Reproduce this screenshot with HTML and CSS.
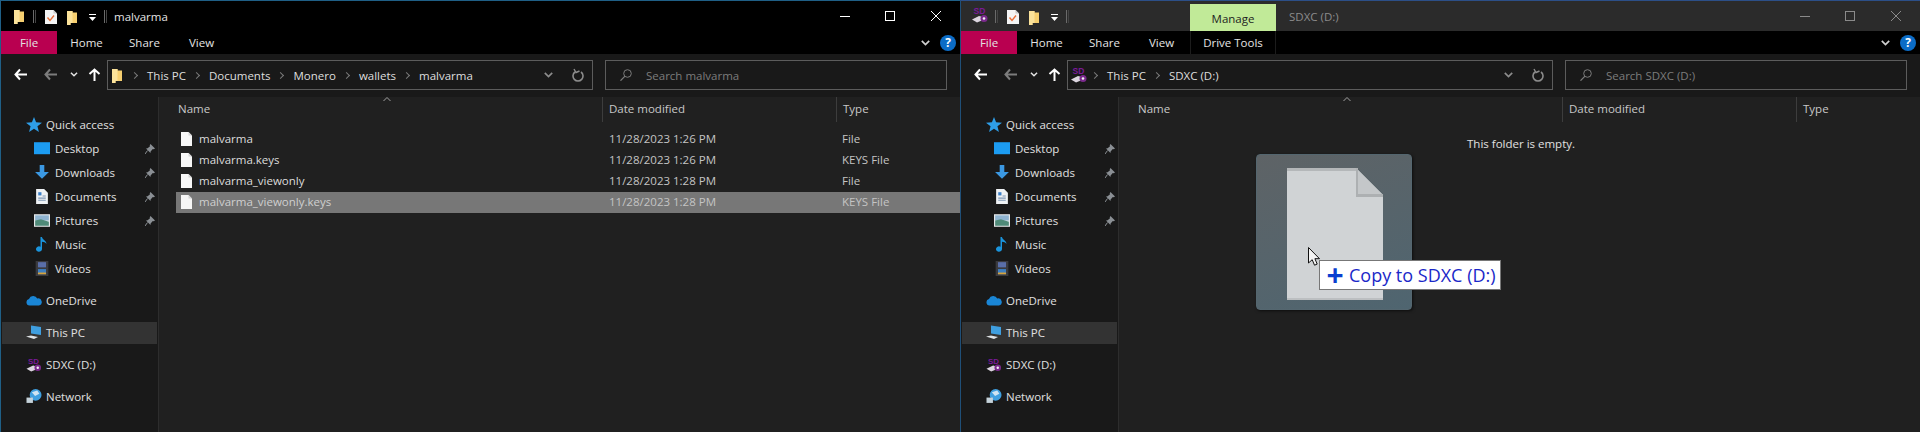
FILE: index.html
```html
<!DOCTYPE html>
<html lang="en">
  <head>
    <meta charset="UTF-8" />
    <title>File Explorer</title>
    <link rel="stylesheet" href="styles.css">
  </head>
  <body>
    <!-- shared icons -->
    <svg class="sprite" xmlns="http://www.w3.org/2000/svg">
      <symbol id="i-folder" viewBox="0 0 10 15">
        <path d="M0 1h5.500v1.500H10V13H3.500v2H0z" fill="#f6cf70"/>
        <path d="M0 1h5.500v12H3.500v2H0z" fill="#fbe29a"/>
      </symbol>
      <symbol id="i-props" viewBox="0 0 12 14">
        <path d="M0 0h8.500L12 3.500V14H0z" fill="#f4f4f4"/>
        <path d="M8.500 0v3.500H12z" fill="#c8c8c8"/>
        <path d="M2.500 7.500l2.500 3 4-5" fill="none" stroke="#e8703a" stroke-width="1.400"/>
      </symbol>
      <symbol id="i-qat" viewBox="0 0 7 7">
        <path d="M0 0h7v1H0zM0 3h7L3.500 7z" fill="#fff"/>
      </symbol>
      <symbol id="i-sd" viewBox="0 0 16 16">
        <text x="1.500" y="7" font-family="Liberation Sans, sans-serif" font-size="8.500" font-weight="700" fill="#7a1a98">SD</text>
        <path d="M0 12.500L7 9l4 1v3l-6 2.500z" fill="#dcd6e0"/>
        <circle cx="12" cy="11.500" r="3.500" fill="#7a2a8c"/>
        <circle cx="12" cy="11.500" r="1.300" fill="#f2f2f2"/>
      </symbol>
      <symbol id="i-arrow" viewBox="0 0 13 13">
        <path d="M6 1.500L1.500 6.500 6 11.500M2 6.500h11" fill="none" stroke="currentColor" stroke-width="2"/>
      </symbol>
      <symbol id="i-up" viewBox="0 0 13 13">
        <path d="M1.500 6L6.500 1.500 11.500 6M6.500 2v11" fill="none" stroke="currentColor" stroke-width="2"/>
      </symbol>
      <symbol id="i-down" viewBox="0 0 9 6">
        <path d="M.8 .8L4.500 4.500 8.200 .8" fill="none" stroke="currentColor" stroke-width="1.700"/>
      </symbol>
      <symbol id="i-refresh" viewBox="0 0 12 14">
        <path d="M3 4a5 5 0 1 0 6 0" fill="none" stroke="currentColor" stroke-width="1.600"/>
        <path d="M2 1l2 3.500 3.500-1.500" fill="none" stroke="currentColor" stroke-width="1.400"/>
      </symbol>
      <symbol id="i-search" viewBox="0 0 12 12">
        <circle cx="7.500" cy="4.500" r="3.800" fill="none" stroke="currentColor"/>
        <path d="M5 7.200L.5 11.700" stroke="currentColor" stroke-width="1.200"/>
      </symbol>
      <symbol id="i-file" viewBox="0 0 11 14">
        <path d="M0 0h7.500L11 3.500V14H0z" fill="#f6f6f6"/>
        <path d="M7.500 0v3.500H11z" fill="#d4d4d4"/>
      </symbol>
      <symbol id="i-star" viewBox="0 0 13 12">
        <path d="M6.500 0l1.700 4.200 4.800.3-3.700 3 1.200 4.500-4-2.500-4 2.500 1.200-4.500L0 4.500l4.800-.3z" fill="#2e9ee8"/>
      </symbol>
      <symbol id="i-desktop" viewBox="0 0 14 11">
        <path d="M0 0h14v10.500H0z" fill="#1c9cf2"/>
      </symbol>
      <symbol id="i-dl" viewBox="0 0 12 13">
        <path d="M4 0h4v6h4l-6 6-6-6h4z" fill="#3b98e2"/>
      </symbol>
      <symbol id="i-doc" viewBox="0 0 11 14">
        <path d="M0 0h7.500L11 3.500V14H0z" fill="#eef1f4"/>
        <path d="M2 3h3v3H2z" fill="#3b80c8"/>
        <path d="M6 6h3v1H6zM2 8h7v1H2zM2 10h7v1H2z" fill="#7f98b5"/>
      </symbol>
      <symbol id="i-pic" viewBox="0 0 14 11">
        <path d="M0 0h14v11H0z" fill="#e6e9ea"/>
        <path d="M1 1h12v4.500H1z" fill="#8fb4d0"/>
        <path d="M1 5.500l5-1 7 2V10H1z" fill="#4f8a78"/>
      </symbol>
      <symbol id="i-music" viewBox="0 0 11 15">
        <path d="M4 0h1.500c.3 3 4.500 3.500 4.500 7-1-1.500-2.500-2-4.500-2.200V12a3 2.700 0 1 1-1.500-2.300z" fill="#1a94dc"/>
      </symbol>
      <symbol id="i-video" viewBox="0 0 11 13">
        <path d="M0 0h11v13H0z" fill="#3a3a3e"/>
        <path d="M2 1h7v4.500H2z" fill="#5a6ea8"/>
        <path d="M2 7h7v4.500H2z" fill="#3d7fc0"/>
        <path d="M2 10h7v1.500H2z" fill="#d8a23a"/>
      </symbol>
      <symbol id="i-cloud" viewBox="0 0 16 10">
        <path d="M3.500 10A3.300 3.300 0 0 1 3 3.500 4.500 4.500 0 0 1 11.300 3 3.500 3.500 0 0 1 13 10z" fill="#1a86d6"/>
      </symbol>
      <symbol id="i-pc" viewBox="0 0 16 14">
        <path d="M5 0l10 1.500v8L5 8z" fill="#3f9fe0"/>
        <path d="M0 11l5-1 7 1.500-4 2z" fill="#dfe3e6"/>
      </symbol>
      <symbol id="i-net" viewBox="0 0 14 14">
        <circle cx="8.500" cy="5.500" r="5.500" fill="#3f9fe0"/>
        <path d="M5 3l5-1.500 2 3-4 2z" fill="#cfe4f2"/>
        <path d="M0 8h6v5H0z" fill="#c5d2da"/>
      </symbol>
      <symbol id="i-pin" viewBox="0 0 10 10">
        <path d="M5.500 0L10 4.500 8.800 5.300 7.800 5 5.600 7.400 5.500 9 1 4.500l1.600-.2L5 2.200l-.3-1z" fill="#8a8f94"/>
        <path d="M2.500 6.500L0 10" stroke="#8a8f94" stroke-width="1"/>
      </symbol>
    </svg>

    <div class="window window-active">
      <div class="titlebar">
        <svg class="ic-folder qat-first"><use href="#i-folder"/></svg>
        <span class="qat-sep"></span>
        <svg class="ic-props"><use href="#i-props"/></svg>
        <svg class="ic-folder qat-folder"><use href="#i-folder"/></svg>
        <svg class="ic-qat"><use href="#i-qat"/></svg>
        <span class="qat-sep qat-sep-end"></span>
        <span class="title">malvarma</span>
        <div class="controls">
          <span class="ctl ctl-min"></span>
          <span class="ctl ctl-max"></span>
          <svg class="ctl ctl-close" viewBox="0 0 10 10"><path d="M0 0l10 10M10 0L0 10" stroke="currentColor" stroke-width="1"/></svg>
        </div>
      </div>
      <div class="ribbon">
        <span class="tab tab-file">File</span>
        <span class="tab tab-home">Home</span>
        <span class="tab tab-share">Share</span>
        <span class="tab tab-view">View</span>
        <svg class="ribbon-chev"><use href="#i-down"/></svg>
        <span class="help">?</span>
      </div>
      <div class="nav">
        <svg class="nav-back"><use href="#i-arrow"/></svg>
        <svg class="nav-fwd"><use href="#i-arrow"/></svg>
        <svg class="nav-recent"><use href="#i-down"/></svg>
        <svg class="nav-up"><use href="#i-up"/></svg>
        <div class="address">
          <svg class="ic-folder addr-icon"><use href="#i-folder"/></svg>
          <span class="crumb-sep"></span>
          <span>This PC</span>
          <span class="crumb-sep"></span>
          <span>Documents</span>
          <span class="crumb-sep"></span>
          <span>Monero</span>
          <span class="crumb-sep"></span>
          <span>wallets</span>
          <span class="crumb-sep"></span>
          <span>malvarma</span>
          <svg class="addr-chev"><use href="#i-down"/></svg>
          <svg class="addr-refresh"><use href="#i-refresh"/></svg>
        </div>
        <div class="search">
          <svg class="search-icon"><use href="#i-search"/></svg>
          <span>Search malvarma</span>
        </div>
      </div>
      <div class="main">
        <div class="sidebar">
          <div class="group">
            <div class="side-row"><svg class="side-ic"><use href="#i-star"/></svg>Quick access</div>
            <div class="side-row side-sub"><svg class="side-ic"><use href="#i-desktop"/></svg>Desktop<svg class="pin"><use href="#i-pin"/></svg></div>
            <div class="side-row side-sub"><svg class="side-ic"><use href="#i-dl"/></svg>Downloads<svg class="pin"><use href="#i-pin"/></svg></div>
            <div class="side-row side-sub"><svg class="side-ic"><use href="#i-doc"/></svg>Documents<svg class="pin"><use href="#i-pin"/></svg></div>
            <div class="side-row side-sub"><svg class="side-ic"><use href="#i-pic"/></svg>Pictures<svg class="pin"><use href="#i-pin"/></svg></div>
            <div class="side-row side-sub"><svg class="side-ic"><use href="#i-music"/></svg>Music</div>
            <div class="side-row side-sub"><svg class="side-ic"><use href="#i-video"/></svg>Videos</div>
          </div>
          <div class="group"><div class="side-row"><svg class="side-ic"><use href="#i-cloud"/></svg>OneDrive</div></div>
          <div class="group"><div class="side-row side-current"><svg class="side-ic"><use href="#i-pc"/></svg>This PC</div></div>
          <div class="group"><div class="side-row"><svg class="side-ic"><use href="#i-sd"/></svg>SDXC (D:)</div></div>
          <div class="group"><div class="side-row"><svg class="side-ic"><use href="#i-net"/></svg>Network</div></div>
        </div>
        <div class="content">
          <div class="head">
            <span class="col col-name">Name<svg class="sort" viewBox="0 0 8 4"><path d="M.5 4L4 .5 7.500 4" fill="none" stroke="currentColor"/></svg></span>
            <span class="col col-date">Date modified</span>
            <span class="col col-type">Type</span>
          </div>
          <div class="files">
            <div class="file"><span class="file-name"><svg class="file-ic"><use href="#i-file"/></svg>malvarma</span><span class="file-date">11/28/2023 1:26 PM</span><span class="file-type">File</span></div>
            <div class="file"><span class="file-name"><svg class="file-ic"><use href="#i-file"/></svg>malvarma.keys</span><span class="file-date">11/28/2023 1:26 PM</span><span class="file-type">KEYS File</span></div>
            <div class="file"><span class="file-name"><svg class="file-ic"><use href="#i-file"/></svg>malvarma_viewonly</span><span class="file-date">11/28/2023 1:28 PM</span><span class="file-type">File</span></div>
            <div class="file file-selected"><span class="file-name"><svg class="file-ic"><use href="#i-file"/></svg>malvarma_viewonly.keys</span><span class="file-date">11/28/2023 1:28 PM</span><span class="file-type">KEYS File</span></div>
          </div>
        </div>
      </div>
    </div>

    <div class="window window-inactive">
      <div class="titlebar">
        <svg class="ic-sd qat-first"><use href="#i-sd"/></svg>
        <span class="qat-sep"></span>
        <svg class="ic-props"><use href="#i-props"/></svg>
        <svg class="ic-folder qat-folder"><use href="#i-folder"/></svg>
        <svg class="ic-qat"><use href="#i-qat"/></svg>
        <span class="qat-sep qat-sep-end"></span>
        <span class="context-tab">Manage</span>
        <span class="title">SDXC (D:)</span>
        <div class="controls">
          <span class="ctl ctl-min"></span>
          <span class="ctl ctl-max"></span>
          <svg class="ctl ctl-close" viewBox="0 0 10 10"><path d="M0 0l10 10M10 0L0 10" stroke="currentColor" stroke-width="1"/></svg>
        </div>
      </div>
      <div class="ribbon">
        <span class="tab tab-file">File</span>
        <span class="tab tab-home">Home</span>
        <span class="tab tab-share">Share</span>
        <span class="tab tab-view">View</span>
        <span class="tab tab-drive">Drive Tools</span>
        <svg class="ribbon-chev"><use href="#i-down"/></svg>
        <span class="help">?</span>
      </div>
      <div class="nav">
        <svg class="nav-back"><use href="#i-arrow"/></svg>
        <svg class="nav-fwd"><use href="#i-arrow"/></svg>
        <svg class="nav-recent"><use href="#i-down"/></svg>
        <svg class="nav-up"><use href="#i-up"/></svg>
        <div class="address">
          <svg class="ic-sd addr-icon"><use href="#i-sd"/></svg>
          <span class="crumb-sep"></span>
          <span>This PC</span>
          <span class="crumb-sep"></span>
          <span>SDXC (D:)</span>
          <svg class="addr-chev"><use href="#i-down"/></svg>
          <svg class="addr-refresh"><use href="#i-refresh"/></svg>
        </div>
        <div class="search">
          <svg class="search-icon"><use href="#i-search"/></svg>
          <span>Search SDXC (D:)</span>
        </div>
      </div>
      <div class="main">
        <div class="sidebar">
          <div class="group">
            <div class="side-row"><svg class="side-ic"><use href="#i-star"/></svg>Quick access</div>
            <div class="side-row side-sub"><svg class="side-ic"><use href="#i-desktop"/></svg>Desktop<svg class="pin"><use href="#i-pin"/></svg></div>
            <div class="side-row side-sub"><svg class="side-ic"><use href="#i-dl"/></svg>Downloads<svg class="pin"><use href="#i-pin"/></svg></div>
            <div class="side-row side-sub"><svg class="side-ic"><use href="#i-doc"/></svg>Documents<svg class="pin"><use href="#i-pin"/></svg></div>
            <div class="side-row side-sub"><svg class="side-ic"><use href="#i-pic"/></svg>Pictures<svg class="pin"><use href="#i-pin"/></svg></div>
            <div class="side-row side-sub"><svg class="side-ic"><use href="#i-music"/></svg>Music</div>
            <div class="side-row side-sub"><svg class="side-ic"><use href="#i-video"/></svg>Videos</div>
          </div>
          <div class="group"><div class="side-row"><svg class="side-ic"><use href="#i-cloud"/></svg>OneDrive</div></div>
          <div class="group"><div class="side-row side-current"><svg class="side-ic"><use href="#i-pc"/></svg>This PC</div></div>
          <div class="group"><div class="side-row"><svg class="side-ic"><use href="#i-sd"/></svg>SDXC (D:)</div></div>
          <div class="group"><div class="side-row"><svg class="side-ic"><use href="#i-net"/></svg>Network</div></div>
        </div>
        <div class="content">
          <div class="head">
            <span class="col col-name">Name<svg class="sort" viewBox="0 0 8 4"><path d="M.5 4L4 .5 7.500 4" fill="none" stroke="currentColor"/></svg></span>
            <span class="col col-date">Date modified</span>
            <span class="col col-type">Type</span>
          </div>
          <div class="empty">This folder is empty.</div>
        </div>
      </div>

      <!-- drag image over the empty folder -->
      <div class="drag">
        <svg class="drag-page" viewBox="0 0 96 132">
          <path d="M0 0h69l27 27v105H0z" fill="#d0d3d5"/>
          <path d="M0 0h69v3H0z" fill="#b4b7b9"/>
          <path d="M0 130h96v2H0z" fill="#bcbfc1"/>
          <path d="M69 0l27 27v2H69z" fill="#c4c7c9"/>
          <path d="M69 0v29h27v-3H71V0z" fill="#adb0b2"/>
        </svg>
      </div>
      <svg class="drag-cursor" viewBox="0 0 12 19">
        <path d="M.5 .5v15.500l3.700-3.300 2.300 5.500 2.700-1.100-2.300-5.400H11.500z" fill="#f4f4f4" stroke="#111"/>
      </svg>
      <div class="drag-tip"><span class="drag-plus">+</span>Copy to SDXC (D:)</div>
    </div>
  </body>
</html>
```

FILE: styles.css
```css
* {
  box-sizing: border-box;
}

html, body {
  height: 100%;
}

body {
  margin: 0;
  display: flex;
  overflow: hidden;
  background: #000;
  color: #e4e4e4;
  font-family: "Open Sans", "Noto Sans", sans-serif;
  font-size: 11.5px;
}

svg {
  display: block;
  flex: none;
}

.sprite {
  display: none;
}

.window {
  position: relative;
  width: 960px;
  height: 432px;
  display: flex;
  flex-direction: column;
  border-top: 1px solid #1f5f86;
  border-left: 1px solid #1f5f86;
}

.window-inactive {
  border-top-color: #2c4f88;
  border-left-color: #1f4f78;
}

/* title bar */
.titlebar {
  height: 30px;
  flex: none;
  display: flex;
  align-items: center;
  background: #000;
}

.window-inactive .titlebar {
  background: #2b2b2b;
}

.qat-first {
  margin-left: 13px;
}

.ic-folder {
  width: 10px;
  height: 15px;
}

.ic-sd {
  width: 16px;
  height: 16px;
}

.window-inactive .qat-first {
  margin-left: 11px;
  margin-top: -2px;
}

.window-inactive .qat-sep {
  margin-left: 7px;
}

.window-inactive .qat-sep-end {
  margin-left: 8px;
}

.qat-sep {
  width: 3px;
  height: 13px;
  margin-left: 9px;
  border-left: 1px solid #6a6a6a;
  border-right: 1px solid #444;
}

.qat-sep-end {
  margin-left: 8px;
}

.ic-props {
  width: 12px;
  height: 14px;
  margin-left: 9px;
  margin-top: 1px;
}

.qat-folder {
  margin-left: 10px;
  margin-top: 2px;
}

.ic-qat {
  width: 7px;
  height: 7px;
  margin-left: 12px;
  margin-top: 2px;
}

.title {
  margin-left: 7px;
}

.window-inactive .title {
  margin-left: 13px;
  color: #8c8c8c;
}

.context-tab {
  align-self: flex-end;
  width: 86px;
  height: 27px;
  margin-left: 121px;
  display: flex;
  align-items: center;
  justify-content: center;
  padding-top: 2px;
  background: #c1ea98;
  color: #1e1e1e;
}

.controls {
  margin-left: auto;
  display: flex;
  align-items: center;
  padding-right: 19px;
  color: #fff;
}

.window-inactive .controls {
  color: #8a8a8a;
}

.ctl {
  width: 10px;
  height: 10px;
  margin-left: 35px;
}

.ctl-min {
  border-bottom: 1px solid currentColor;
  height: 6px;
  margin-bottom: 4px;
}

.ctl-max {
  border: 1px solid currentColor;
}

.ctl-close {
  margin-left: 36px;
}

/* ribbon */
.ribbon {
  height: 23px;
  flex: none;
  display: flex;
  align-items: center;
  background: #000;
}

.tab {
  height: 100%;
  display: flex;
  align-items: center;
  justify-content: center;
}

.tab-file {
  width: 56px;
  background: #b90050;
}

.tab-home {
  width: 59px;
}

.tab-share {
  width: 57px;
}

.tab-view {
  width: 57px;
}

.tab-drive {
  width: 86px;
  border-left: 1px solid #1c1c1c;
  border-right: 1px solid #1c1c1c;
}

.ribbon-chev {
  width: 9px;
  height: 6px;
  margin-left: auto;
  color: #d0d0d0;
}

.help {
  width: 16px;
  height: 16px;
  margin: 0 4px 0 10px;
  display: flex;
  align-items: center;
  justify-content: center;
  border-radius: 50%;
  background: #0b6cc6;
  color: #fff;
  font-weight: 700;
  font-size: 12px;
}

/* nav row */
.nav {
  height: 43px;
  flex: none;
  display: flex;
  align-items: flex-start;
  padding: 6px 0 0 13px;
  background: #191919;
}

.nav-back, .nav-fwd, .nav-up {
  width: 13px;
  height: 13px;
  margin-top: 8px;
  color: #fff;
}

.nav-fwd {
  margin-left: 17px;
  color: #7d7d7d;
}

.nav-recent {
  width: 8px;
  height: 5px;
  margin: 12px 0 0 13px;
  color: #e6e6e6;
}

.nav-up {
  margin-left: 10px;
}

.address, .search {
  height: 30px;
  display: flex;
  align-items: center;
  border: 1px solid #5c5c5c;
}

.address {
  width: 486px;
  margin-left: 6px;
  padding-left: 4px;
  gap: 9px;
  color: #dedede;
}

.addr-icon {
  margin-right: 2px;
}

.address .ic-sd {
  margin-left: -1px;
  margin-right: -3px;
}

.crumb-sep {
  width: 5px;
  height: 5px;
  margin: 0 1px 0 -1px;
  border-top: 1.5px solid #7a7a7a;
  border-right: 1.5px solid #7a7a7a;
  transform: rotate(45deg);
}

.addr-chev {
  width: 9px;
  height: 6px;
  margin-left: auto;
  color: #8c8c8c;
}

.addr-refresh {
  width: 12px;
  height: 14px;
  margin-right: 8px;
  margin-left: 10px;
  color: #8c8c8c;
}

.search {
  width: 342px;
  margin-left: 12px;
  padding-left: 14px;
  color: #7c7c7c;
}

.search-icon {
  width: 12px;
  height: 12px;
  margin-right: 14px;
}

/* main */
.main {
  flex: 1;
  min-height: 0;
  display: flex;
}

.sidebar {
  width: 158px;
  flex: none;
  padding: 16px 1px 0 1px;
  display: flex;
  flex-direction: column;
  gap: 8px;
  background: #191919;
  border-right: 1px solid #2d2d2d;
}

.side-row {
  height: 24px;
  display: flex;
  align-items: center;
  padding: 0 0 1px 24px;
  color: #e0e0e0;
}

.side-sub {
  padding-left: 32px;
}

.side-current {
  height: 22px;
  margin: 1px 0;
  background: #333;
}

.side-ic {
  width: 16px;
  height: 15px;
  margin-right: 4px;
}

.side-sub .side-ic {
  margin-right: 5px;
}

.pin {
  width: 10px;
  height: 10px;
  margin-left: auto;
  margin-right: 2px;
}

.content {
  flex: 1;
  min-width: 0;
  background: #202020;
}

.head {
  height: 25px;
  display: grid;
  grid-template-columns: 443px 234px 1fr;
  color: #c8c8c8;
}

.col {
  position: relative;
  padding: 4px 0 0 6px;
  border-left: 1px solid #3d3d3d;
}

.col-name {
  padding-left: 19px;
  border-left: 0;
}

.sort {
  position: absolute;
  left: 224px;
  top: 0;
  width: 8px;
  height: 4px;
  color: #a0a0a0;
}

.files {
  padding: 7px 0 0 17px;
}

.file {
  height: 21px;
  display: grid;
  grid-template-columns: 426px 233px 1fr;
  align-items: center;
  padding-bottom: 2px;
  color: #dcdcdc;
}

.file-selected {
  background: #777;
  color: #cfcfcf;
}

.file-name {
  display: flex;
  align-items: center;
  padding-left: 5px;
}

.file-ic {
  width: 11px;
  height: 14px;
  margin-right: 7px;
}

.file-date {
  padding-left: 7px;
  color: #c4c4c4;
}

.file-type {
  padding-left: 7px;
  color: #c4c4c4;
}

.empty {
  padding: 14px 0 0 348px;
  color: #e0e0e0;
}

/* drag image */
.drag {
  position: absolute;
  left: 295px;
  top: 153px;
  width: 156px;
  height: 156px;
  padding: 13px 0 0 30px;
  border: 1px solid #54666f;
  border-radius: 4px;
  background: linear-gradient(160deg, #5e6366, #4f6570);
  box-shadow: 1px 1px 3px rgba(0, 0, 0, 0.6);
}

.drag-page {
  width: 96px;
  height: 132px;
}

.drag-cursor {
  position: absolute;
  left: 347px;
  top: 246px;
  width: 12px;
  height: 19px;
}

.drag-tip {
  position: absolute;
  left: 358px;
  top: 259px;
  width: 182px;
  height: 30px;
  display: flex;
  align-items: center;
  padding-left: 6px;
  background: #fff;
  border: 1px solid #777;
  color: #1a28c8;
  font-size: 18px;
  white-space: nowrap;
}

.drag-plus {
  width: 18px;
  margin-right: 5px;
  color: #0a3fd0;
  font-size: 30px;
  font-weight: 700;
  line-height: 26px;
  text-align: center;
}
```
